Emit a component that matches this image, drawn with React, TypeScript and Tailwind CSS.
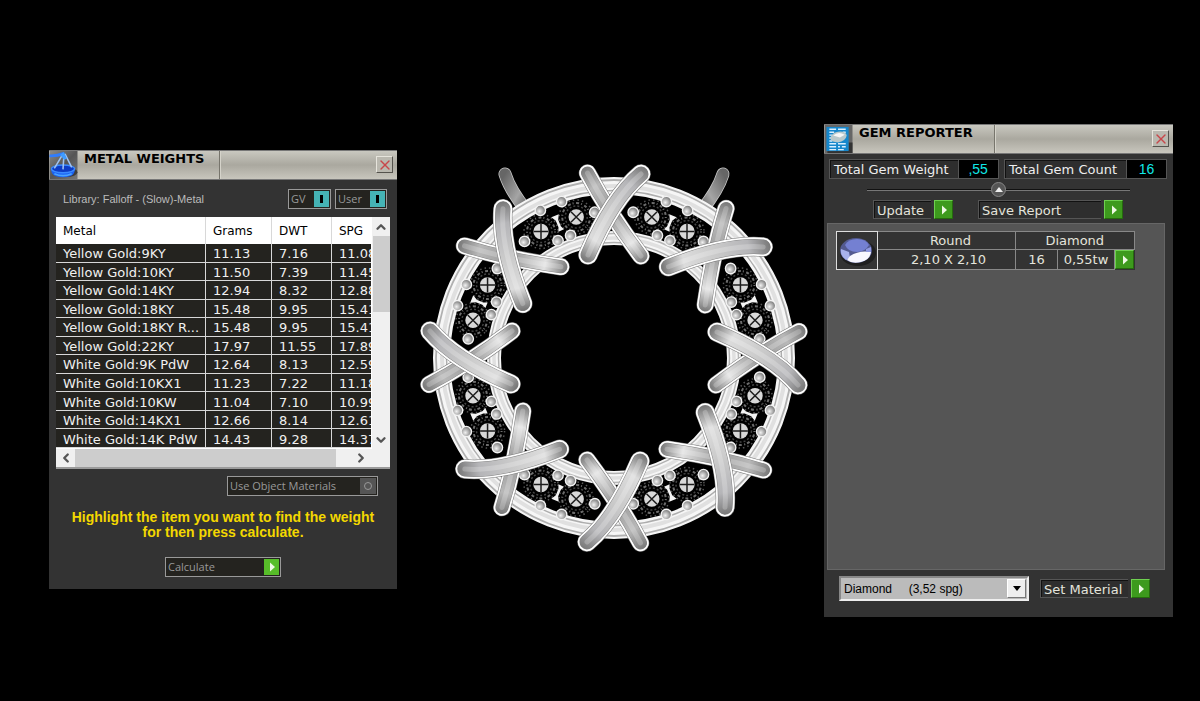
import type { ReactNode } from "react";
import { ChevronDown, ChevronLeft, ChevronRight, ChevronUp, X } from "lucide-react";

const metals = [
  ["Yellow Gold:9KY", "11.13", "7.16", "11.08"],
  ["Yellow Gold:10KY", "11.50", "7.39", "11.45"],
  ["Yellow Gold:14KY", "12.94", "8.32", "12.88"],
  ["Yellow Gold:18KY", "15.48", "9.95", "15.41"],
  ["Yellow Gold:18KY R...", "15.48", "9.95", "15.41"],
  ["Yellow Gold:22KY", "17.97", "11.55", "17.89"],
  ["White Gold:9K PdW", "12.64", "8.13", "12.59"],
  ["White Gold:10KX1", "11.23", "7.22", "11.18"],
  ["White Gold:10KW", "11.04", "7.10", "10.99"],
  ["White Gold:14KX1", "12.66", "8.14", "12.61"],
  ["White Gold:14K PdW", "14.43", "9.28", "14.37"],
];

const sectors = [0, 1, 2, 3, 4, 5, 6, 7];

// [radius, angle from the middle of the sector]
const prongs = [
  [165, -4],
  [165, 4],
  [147, -15],
  [147, 15],
  [130, -3],
  [130, 3],
];

function polar(radius: number, degrees: number) {
  const a = (degrees * Math.PI) / 180;
  return { x: radius * Math.sin(a), y: -radius * Math.cos(a) };
}

function Gem({ angle }: { angle: number }) {
  const { x, y } = polar(146, angle);
  const nearAxis = Math.round(angle / 15) % 6 === 1 || Math.round(angle / 15) % 6 === 5;
  return (
    <g transform={`translate(${x} ${y}) rotate(${nearAxis ? 45 : 0})`}>
      <circle r="17" fill="none" stroke="#555" strokeWidth="1.5" strokeDasharray="1.5 3" />
      <circle r="14" fill="none" stroke="#6c6c6c" strokeWidth="2" strokeDasharray="1 2.5 3 2" />
      <circle r="11" fill="none" stroke="#444" strokeWidth="1.5" strokeDasharray="2 2" />
      <circle r="7.7" fill="#d8d8d8" />
      <path d="M-7.5 0H7.5M0 -7.5V7.5" stroke="#1c1c1c" strokeWidth="1.5" />
    </g>
  );
}

function Rod({ d, fill, width }: { d: string; fill: string; width: number }) {
  return (
    <g fill="none" strokeLinecap="round">
      <path d={d} stroke="#777" strokeWidth={width} />
      <path d={d} stroke="#fff" strokeWidth={width - 1} />
      <path d={d} stroke="#858585" strokeWidth={width - 4.5} />
      <path d={d} stroke={fill} strokeWidth={width - 5.5} />
      <path d={d} stroke="#fff" strokeOpacity="0.22" strokeWidth="5" />
    </g>
  );
}

function Pendant() {
  return (
    <svg viewBox="-196 -196 392 392" className="w-full max-w-[392px]" role="img" aria-label="Pendant">
      <defs>
        <linearGradient id="front" gradientUnits="userSpaceOnUse" x1="32" y1="-190" x2="-30" y2="-98">
          <stop offset="0" stopColor="#777" />
          <stop offset="0.2" stopColor="#b5b5b8" />
          <stop offset="0.5" stopColor="#cacaca" />
          <stop offset="0.8" stopColor="#dcdcdc" />
          <stop offset="1" stopColor="#777" />
        </linearGradient>
        <linearGradient id="back" gradientUnits="userSpaceOnUse" x1="-30" y1="-191" x2="31" y2="-97">
          <stop offset="0" stopColor="#777" />
          <stop offset="0.2" stopColor="#b8b8b8" />
          <stop offset="0.5" stopColor="#999" />
          <stop offset="0.8" stopColor="#e2e2e2" />
          <stop offset="1" stopColor="#777" />
        </linearGradient>
        <linearGradient id="bail" x1="0" y1="0" x2="1" y2="1">
          <stop offset="0" stopColor="#666" />
          <stop offset="0.6" stopColor="#a5a5a5" />
          <stop offset="1" stopColor="#5c5c5c" />
        </linearGradient>
        <radialGradient id="bead" cx="0.4" cy="0.6">
          <stop offset="0" stopColor="#f2f2f2" />
          <stop offset="0.6" stopColor="#b4b4b4" />
          <stop offset="1" stopColor="#888" />
        </radialGradient>
      </defs>
      {[1, -1].map((side) => (
        <g key={side} transform={`scale(${side} 1)`} fill="none" strokeLinecap="round">
          <path d="M-109 -184Q-104 -168 -88 -148" stroke="#c9c9c9" strokeWidth="13" />
          <path d="M-109 -184Q-104 -168 -88 -148" stroke="url(#bail)" strokeWidth="11.5" />
        </g>
      ))}
      <circle r="146" fill="none" stroke="#000" strokeWidth="50" />
      {sectors.map((s) => (
        <g key={s}>
          <Gem angle={s * 45 + 15} />
          <Gem angle={s * 45 + 30} />
          <path
            transform={`rotate(${s * 45 + 22.5})`}
            d="M-4 -154L4 -154L1.3 -149L1.3 -142L3 -138L-3 -138L-1.3 -142L-1.3 -149Z"
            fill="#f4f4f4"
          />
        </g>
      ))}
      <g fill="none">
        <circle r="172.5" stroke="#f6f6f6" strokeWidth="17" />
        <circle r="178" stroke="#b0b0b0" strokeWidth="1.8" />
        <circle r="172" stroke="#e0e0e0" strokeWidth="4" />
        <circle r="167.5" stroke="#adadad" strokeWidth="1.4" />
        <circle r="120" stroke="#f6f6f6" strokeWidth="14" />
        <circle r="124.5" stroke="#b8b8b8" strokeWidth="1.4" />
        <circle r="120" stroke="#e0e0e0" strokeWidth="3.5" />
        <circle r="115.5" stroke="#b0b0b0" strokeWidth="1.4" />
      </g>
      {sectors.map((s) =>
        prongs.map(([radius, offset]) => {
          const { x, y } = polar(radius, s * 45 + 22.5 + offset);
          return (
            <circle key={`${s}:${radius}:${offset}`} cx={x} cy={y} r="5.2" fill="url(#bead)" stroke="#f2f2f2" strokeWidth="1.4" />
          );
        }),
      )}
      {sectors.map((s) => (
        <g key={s} transform={`rotate(${s * 45})`}>
          <Rod d="M-26.5 -185Q-6 -146 27 -102" fill="url(#back)" width={17.5} />
          <Rod d="M27 -184C8 -168 -11 -138 -26 -103" fill="url(#front)" width={19.5} />
        </g>
      ))}
    </svg>
  );
}

function ScalesIcon() {
  return (
    <svg viewBox="0 0 29 29" className="h-full w-[29px] shrink-0" aria-hidden="true">
      <defs>
        <linearGradient id="scalesBg" x1="0" y1="0" x2="1" y2="1">
          <stop offset="0" stopColor="#8a8a8a" />
          <stop offset="0.5" stopColor="#555" />
          <stop offset="1" stopColor="#777" />
        </linearGradient>
      </defs>
      <rect width="29" height="29" fill="url(#scalesBg)" />
      <ellipse cx="17" cy="22" rx="12" ry="5" fill="#1c1c1c" opacity="0.6" />
      <path d="M0 5Q7 5.5 15 2.5" fill="none" stroke="#2f7dff" strokeWidth="3" />
      <path d="M2 18Q1 23 6 26Q14 28.5 22 26Q27 23 26 18Z" fill="#1c62f2" />
      <ellipse cx="14" cy="18.5" rx="12" ry="4" fill="#0d3bc4" stroke="#3a8aff" strokeWidth="1.4" />
      <path d="M5 23.5Q14 27.5 23 23.5" fill="none" stroke="#4aa4ff" strokeWidth="1.8" />
      <path d="M14 3L5 18M15 3L14 19M16 3L23 17" fill="none" stroke="#9fc2f2" strokeWidth="1.6" />
      <path d="M11 4L15 1L18 8L15 9Z" fill="#3f9cff" />
    </svg>
  );
}

function ReportIcon() {
  return (
    <svg viewBox="0 0 29 29" className="h-full w-[29px] shrink-0" aria-hidden="true">
      <rect width="29" height="29" fill="#666" />
      <path d="M25 18H29V29H3V26H25Z" fill="#333" />
      <rect x="2" y="2" width="23" height="25" fill="#1687cc" />
      <path
        d="M5 4.5H12M14 4.5H22M5 7.5H10M19 7.5H22M5 10.5H8M5 13.5H7M5 16.5H8M5 19.5H12M14 19.5H22M5 22.5H12M14 22.5H16M18 22.5H22M5 25.5H12M14 25.5H20"
        stroke="#d9efff"
        strokeWidth="1.5"
      />
      <path d="M6 14Q7 8 14 7Q22 6 23 11Q22 17 14 18Q7 18 6 14Z" fill="#b9c9cc" />
      <path d="M9 11Q14 6 21 10L16 13Z" fill="#f6f6f6" />
    </svg>
  );
}

function TitleBar({ title, icon }: { title: string; icon: ReactNode }) {
  return (
    <header className="flex h-[30px] border-t border-b border-t-[#777] border-b-[#777] bg-linear-to-b from-[#c9c8c0] via-[#aaa89f] to-[#c8c6bd]">
      {icon}
      <h2 className="w-[142px] shrink-0 border-r border-[#77756c] pl-1.5 text-[13px] leading-4 font-bold whitespace-nowrap text-black">
        {title}
      </h2>
      <div className="flex flex-1 items-end justify-end border-l border-[#d5d3ca] pr-1 pb-1.5">
        <button
          type="button"
          aria-label={`Close ${title}`}
          className="flex size-[17px] items-center justify-center border border-t-[#e6e4dc] border-r-[#55534d] border-b-[#55534d] border-l-[#e6e4dc] bg-[#bab8af]"
        >
          <X className="size-4 shrink-0 text-[#c8464a]" strokeWidth={2} />
        </button>
      </div>
    </header>
  );
}

function PlayMark({ className }: { className: string }) {
  return (
    <span className={`flex items-center justify-center ${className}`}>
      <svg viewBox="0 0 6 10" className="h-2.5 w-1.5" aria-hidden="true">
        <path d="M1 0.5L6 5L1 9.5Z" fill="#eef8e4" />
      </svg>
    </span>
  );
}

const greenBevel =
  "size-[19px] shrink-0 border border-t-[#6fd050] border-r-[#256b0d] border-b-[#256b0d] border-l-[#6fd050] bg-[#3d9a1d]";

function ActionButton({ label, className }: { label: string; className: string }) {
  return (
    <button type="button" className="flex items-center gap-[3px] text-[13px] text-[#e4e4dc]">
      <span
        className={`h-[19px] border border-r-0 border-t-[#555] border-b-[#555] border-l-[#555] bg-[#2e2e2e] pl-[3px] text-left leading-[19px] whitespace-nowrap shadow-[inset_1px_1px_0_#111] ${className}`}
      >
        {label}
      </span>
      <PlayMark className={greenBevel} />
    </button>
  );
}

function Toggle({ label }: { label: string }) {
  return (
    <button
      type="button"
      aria-pressed="true"
      className="flex h-5 items-center justify-between border border-[#999] bg-[#24231f] pr-px pl-0.5 font-['Open_Sans',sans-serif] text-[11px] text-[#999]"
    >
      <span>{label}</span>
      <span className="flex h-4 w-[15px] items-center justify-center bg-[#45b3b5]">
        <span className="h-2 w-[3px] bg-black" />
      </span>
    </button>
  );
}

function MetalTable() {
  const edge = "border-r border-[#d8d8d8] pl-[7px] text-left font-normal whitespace-nowrap";
  return (
    <div className="border-b-2 border-[#9a9a9a] bg-[#f0f0f0]">
      <div className="flex">
        <div className="flex-1 overflow-hidden border-b border-white">
          <table className="h-[231px] w-[346px] table-fixed border-separate border-spacing-0 bg-[#24231f] text-[13px] leading-[15px] text-[#f0f0f0]">
            <thead className="bg-white text-[12px] text-black">
              <tr className="h-[27px]">
                <th className={`w-[150px] pt-0.5 ${edge}`}>Metal</th>
                <th className={`w-[66px] pt-0.5 ${edge}`}>Grams</th>
                <th className={`w-[60px] pt-0.5 ${edge}`}>DWT</th>
                <th className={`pt-0.5 ${edge}`}>SPG</th>
              </tr>
            </thead>
            <tbody>
              {metals.map((row) => (
                <tr key={row[0]}>
                  {row.map((cell, i) => (
                    <td key={i} className={`border-b pt-0.5 ${edge}`}>
                      {cell}
                    </td>
                  ))}
                </tr>
              ))}
            </tbody>
          </table>
        </div>
        <div className="flex w-[19px] shrink-0 flex-col items-center border-l border-white text-[#555]">
          <button type="button" aria-label="Scroll up" className="flex h-[19px] items-center">
            <ChevronUp className="size-3.5" strokeWidth={4} />
          </button>
          <div className="h-[76px] w-[17px] bg-[#cdcdcd]" />
          <div className="flex-1" />
          <button type="button" aria-label="Scroll down" className="flex h-[18px] items-center">
            <ChevronDown className="size-3.5" strokeWidth={4} />
          </button>
        </div>
      </div>
      <div className="flex h-[18px] items-stretch text-[#555]">
        <button type="button" aria-label="Scroll left" className="flex w-[19px] items-center justify-center">
          <ChevronLeft className="size-3.5" strokeWidth={4} />
        </button>
        <div className="w-[261px] bg-[#cdcdcd]" />
        <button type="button" aria-label="Scroll right" className="ml-auto flex w-[19px] items-center justify-center">
          <ChevronRight className="size-3.5" strokeWidth={4} />
        </button>
        <div className="w-5" />
      </div>
    </div>
  );
}

function MetalWeights() {
  return (
    <section className="mb-0.5 w-[348px] shrink-0 bg-[#333]">
      <TitleBar title="METAL WEIGHTS" icon={<ScalesIcon />} />
      <div className="flex flex-col px-[7px] pb-3">
        <div className="flex gap-1 pt-[9px] pr-[3px] pb-2 pl-[7px]">
          <p className="flex-1 font-['Liberation_Sans',sans-serif] text-[11px] leading-5 text-[#bbb]">
            Library: Falloff - (Slow)-Metal
          </p>
          <div className="grid w-[43px]">
            <Toggle label="GV" />
          </div>
          <div className="grid w-[52px]">
            <Toggle label="User" />
          </div>
        </div>
        <MetalTable />
        <button
          type="button"
          className="mt-[7px] mr-3 flex h-5 w-[151px] items-center justify-between self-end border border-[#999] bg-[#24231f] pr-px pl-0.5 font-['Open_Sans',sans-serif] text-[11px] text-[#999]"
        >
          Use Object Materials
          <span className="flex size-4 items-center justify-center bg-[#555]">
            <span className="size-2 rounded-full border border-[#999]" />
          </span>
        </button>
        <p className="mt-[14px] text-center font-['Liberation_Sans',sans-serif] text-[14px] leading-[15px] font-bold text-[#f4d800]">
          Highlight the item you want to find the weight
          <br />
          for then press calculate.
        </p>
        <button
          type="button"
          className="mt-[17px] flex h-5 w-[116px] items-center justify-between self-center border border-[#999] bg-[#24231f] pr-px pl-0.5 font-['Open_Sans',sans-serif] text-[11px] text-[#999]"
        >
          Calculate
          <PlayMark className="h-4 w-[15px] bg-[#57bd29]" />
        </button>
      </div>
    </section>
  );
}

function Total({ label, value }: { label: string; value: string }) {
  return (
    <dl className="flex h-5 border border-[#555] text-[13px] leading-[18px] text-[#eee]">
      <dt className="border-t border-l border-[#111] bg-[#2e2e2e] pr-[9px] pl-[3px] whitespace-nowrap">{label}</dt>
      <dd className="w-10 border-l border-[#555] bg-black text-center font-['Liberation_Sans',sans-serif] text-[14px] text-[#10e8e8]">
        {value}
      </dd>
    </dl>
  );
}

function DiamondThumb() {
  return (
    <svg viewBox="0 0 40 36" className="h-9 w-10" aria-hidden="true">
      <ellipse cx="21" cy="21" rx="18" ry="13" fill="#1f1f1f" />
      <ellipse cx="19" cy="18.5" rx="16" ry="12.5" fill="#535a90" />
      <path d="M8 13Q11 7 20 7Q29 7 32 13Q28 20 20 20Q11 20 8 13Z" fill="#7480d2" />
      <path d="M4 17L12 20L13 26L9 28Q3 24 4 17Z" fill="#a9b2ec" />
      <path d="M13 24Q22 18 34 20Q33 28 24 30Q15 32 10 28Z" fill="#f8f8ff" />
      <path d="M29 17L34 15L34 20L29 20Z" fill="#8f99e0" />
    </svg>
  );
}

function GemReporter() {
  return (
    <section className="w-[349px] shrink-0 bg-[#333]">
      <TitleBar title="GEM REPORTER" icon={<ReportIcon />} />
      <div className="flex justify-between gap-1 pt-[5px] pr-1.5 pl-[5px]">
        <Total label="Total Gem Weight" value=",55" />
        <Total label="Total Gem Count" value="16" />
      </div>
      <div className="flex h-[21px] items-center justify-center">
        <div className="h-0.5 w-[124px] border-b border-[#777] bg-[#111]" />
        <button
          type="button"
          aria-label="Collapse"
          className="flex size-[15px] items-center justify-center rounded-full border border-[#888] bg-[#555]"
        >
          <svg viewBox="0 0 8 5" className="h-[5px] w-2" aria-hidden="true">
            <path d="M4 0L8 5H0Z" fill="#eee" />
          </svg>
        </button>
        <div className="h-0.5 w-[124px] border-b border-[#777] bg-[#111]" />
      </div>
      <div className="flex gap-[25px] pl-[49px]">
        <ActionButton label="Update" className="w-[58px]" />
        <ActionButton label="Save Report" className="w-[123px]" />
      </div>
      <div className="mt-1 mr-2 ml-[3px] h-[347px] border border-[#666] bg-[#555] pt-[7px] pl-2">
        <table className="border-collapse bg-[#333] text-center text-[13px] leading-[17px] text-[#e4e4dc]">
          <tbody>
            <tr className="h-[18px]">
              <td rowSpan={2} className="w-[41px] border border-[#ddd]">
                <DiamondThumb />
              </td>
              <td className="w-[138px] border border-[#888] pl-2">Round</td>
              <td colSpan={3} className="border border-[#888]">
                Diamond
              </td>
            </tr>
            <tr className="h-[18px]">
              <td className="border border-[#888] pl-1">2,10 X 2,10</td>
              <td className="w-[42px] border border-[#888]">16</td>
              <td className="w-[57px] border border-[#888]">0,55tw</td>
              <td className="w-[19px]">
                <button type="button" aria-label="Select gem" className="block">
                  <PlayMark className={greenBevel} />
                </button>
              </td>
            </tr>
          </tbody>
        </table>
      </div>
      <div className="flex items-center gap-[11px] pt-1.5 pb-4 pl-[15px]">
        <div className="relative">
          <select
            aria-label="Material"
            className="block h-[25px] w-[190px] appearance-none border-2 border-t-[#888] border-r-[#eee] border-b-[#eee] border-l-[#888] bg-[#bbb] pl-[3px] font-['Liberation_Sans',sans-serif] text-[12px] text-black"
          >
            <option>{"Diamond\u00a0\u00a0\u00a0\u00a0\u00a0(3,52 spg)"}</option>
          </select>
          <span className="pointer-events-none absolute top-[3px] right-[3px] flex h-[19px] w-[19px] items-center justify-center border border-t-white border-r-[#777] border-b-[#777] border-l-white bg-[#eee]">
            <svg viewBox="0 0 8 5" className="h-[5px] w-2" aria-hidden="true">
              <path d="M0 0H8L4 5Z" fill="#000" />
            </svg>
          </span>
        </div>
        <ActionButton label="Set Material" className="w-[88px]" />
      </div>
    </section>
  );
}

export default function App() {
  return (
    <main className="flex min-h-screen items-center bg-black pt-10 pr-[27px] pl-[49px] font-['DejaVu_Sans',Verdana,sans-serif]">
      <MetalWeights />
      <div className="mb-[26px] flex min-w-0 flex-1 justify-center pl-1.5">
        <Pendant />
      </div>
      <GemReporter />
    </main>
  );
}
